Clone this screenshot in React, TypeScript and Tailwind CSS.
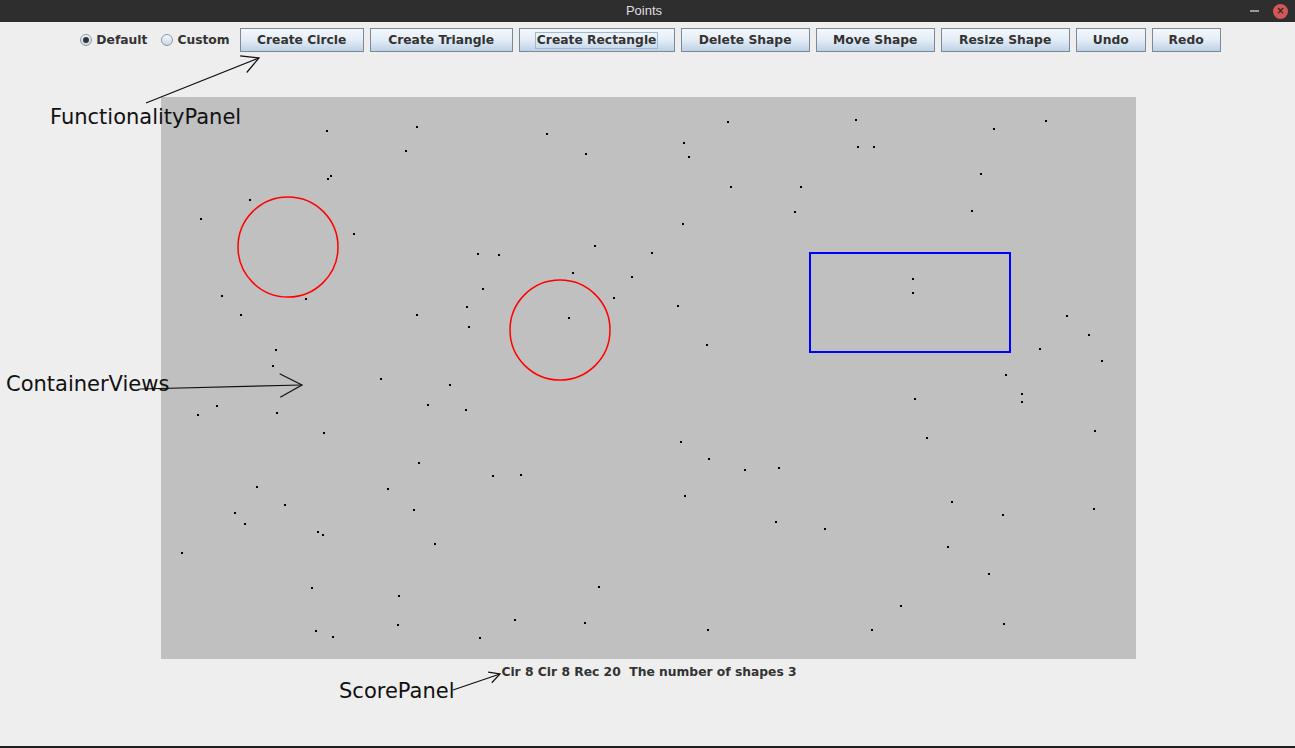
import React from 'react';

const dots: [number, number][] = [
    [326, 130], [416, 126], [546, 133], [405, 150], [585, 153], [683, 142], [688, 156], [727, 121],
    [855, 119], [857, 146], [873, 146], [993, 128], [1045, 120], [330, 175], [327, 178], [249, 199],
    [730, 186], [800, 186], [980, 173], [200, 218], [353, 233], [682, 223], [794, 211], [971, 210],
    [594, 245], [477, 253], [498, 254], [651, 252], [572, 272], [631, 276], [482, 288], [221, 295],
    [305, 298], [613, 297], [466, 306], [677, 305], [912, 278], [912, 292], [240, 314], [416, 314],
    [568, 317], [468, 326], [1066, 315], [1088, 334], [706, 344], [1039, 348], [275, 349], [272, 365],
    [1101, 360], [380, 378], [449, 384], [1005, 374], [1021, 393], [1021, 401], [216, 405], [197, 414],
    [276, 412], [427, 404], [465, 409], [914, 398], [323, 432], [926, 437], [1094, 430], [680, 441],
    [708, 458], [418, 462], [744, 469], [778, 467], [492, 475], [520, 474], [256, 486], [387, 488],
    [684, 495], [951, 501], [284, 504], [234, 512], [413, 509], [1002, 514], [1093, 508], [244, 523],
    [317, 531], [322, 534], [775, 521], [824, 528], [434, 543], [947, 546], [181, 552], [988, 573],
    [598, 586], [311, 587], [398, 595], [900, 605], [514, 619], [584, 622], [1003, 623], [315, 630],
    [332, 636], [397, 624], [479, 637], [707, 629], [871, 629],
];

const buttons: { label: string; w: string; focus?: boolean }[] = [
    { label: 'Create Circle', w: 'w-[124px]' },
    { label: 'Create Triangle', w: 'w-[143px]' },
    { label: 'Create Rectangle', w: 'w-[156px]', focus: true },
    { label: 'Delete Shape', w: 'w-[129px]' },
    { label: 'Move Shape', w: 'w-[119px]' },
    { label: 'Resize Shape', w: 'w-[129px]' },
    { label: 'Undo', w: 'w-[70px]' },
    { label: 'Redo', w: 'w-[69px]' },
];

const uiFont = { fontFamily: '"DejaVu Sans", "Liberation Sans", sans-serif' };

function Arrow({ x1, y1, x2, y2, head = 20, spread = 26 }: { x1: number; y1: number; x2: number; y2: number; head?: number; spread?: number }) {
    const ang = Math.atan2(y2 - y1, x2 - x1);
    const a = (spread * Math.PI) / 180;
    const p1 = [x2 - head * Math.cos(ang - a), y2 - head * Math.sin(ang - a)];
    const p2 = [x2 - head * Math.cos(ang + a), y2 - head * Math.sin(ang + a)];
    return (
        <g stroke="#111" strokeWidth={1.2} fill="none">
            <line x1={x1} y1={y1} x2={x2} y2={y2} />
            <polyline points={`${p1[0]},${p1[1]} ${x2},${y2} ${p2[0]},${p2[1]}`} />
        </g>
    );
}

function Radio({ label, checked }: { label: string; checked?: boolean }) {
    return (
        <div className="flex items-center gap-[4px]">
            <span className="w-[12px] h-[12px] rounded-full border border-[#8a99a8] bg-gradient-to-b from-[#f4f7fb] to-[#c9d8e8] flex items-center justify-center">
                {checked && <span className="w-[6px] h-[6px] rounded-full bg-[#333333]" />}
            </span>
            <span className="text-[12.3px] font-bold text-[#333333]">{label}</span>
        </div>
    );
}

export default function App() {
    return (
        <div className="relative w-[1295px] h-[748px] bg-[#eeeeee] overflow-hidden flex flex-col" style={uiFont}>
            {/* title bar */}
            <div className="h-[22px] bg-[#2e2e2e] flex items-center shrink-0">
                <div className="flex-1" />
                <span className="text-[13px] text-[#dedede]" style={{ fontFamily: '"Liberation Sans", sans-serif' }}>Points</span>
                <div className="flex-1 flex justify-end items-center gap-[14px] pr-[7px]">
                    <span className="w-[9px] h-[2px] bg-[#9a9a9a]" />
                    <span className="w-[15px] h-[15px] rounded-full bg-[#d25858] flex items-center justify-center text-[#3a2020] text-[10px] font-bold leading-none">×</span>
                </div>
            </div>

            {/* functionality panel */}
            <div className="h-[24px] mt-[6px] flex items-center justify-center pl-[6px]">
                <Radio label="Default" checked />
                <div className="ml-[14px]"><Radio label="Custom" /></div>
                <div className="ml-[10px] flex gap-[6px]">
                    {buttons.map((b) => (
                        <div
                            key={b.label}
                            className={`${b.w} h-[24px] border border-[#7a8a99] bg-gradient-to-b from-[#f3f7fb] via-[#e4edf6] to-[#bdd1e6] flex items-center justify-center`}
                        >
                            <span className={`text-[12.3px] font-bold text-[#333333] leading-[15px] px-[1px] ${b.focus ? 'border border-[#a3b8cc]' : 'border border-transparent'}`}>
                                {b.label}
                            </span>
                        </div>
                    ))}
                </div>
            </div>

            {/* container view */}
            <div className="ml-[161px] mt-[45px] w-[975px] h-[562px] bg-[#c0c0c0] shrink-0">
                <svg width={975} height={562} className="block">
                    {dots.map(([x, y], i) => (
                        <rect key={i} x={x - 161} y={y - 97} width={2} height={2} fill="#000" />
                    ))}
                    <circle cx={127} cy={150} r={50} fill="none" stroke="#ff0000" strokeWidth={1.5} />
                    <circle cx={399} cy={233} r={50} fill="none" stroke="#ff0000" strokeWidth={1.5} />
                    <rect x={649} y={156} width={200} height={99} fill="none" stroke="#0000ff" strokeWidth={2} />
                </svg>
            </div>

            {/* score panel */}
            <div className="mt-[4px] ml-[3px] flex justify-center">
                <span className="text-[12.3px] font-bold text-[#333333] whitespace-pre">Cir 8 Cir 8 Rec 20  The number of shapes 3</span>
            </div>

            <div className="flex-1" />
            <div className="h-[2px] bg-[#1e1e1e]" />

            {/* annotations */}
            <span className="absolute left-[50px] top-[107px] text-[21px] leading-[21px] text-[#111]">FunctionalityPanel</span>
            <span className="absolute left-[6px] top-[374px] text-[21px] leading-[21px] text-[#111]">ContainerViews</span>
            <span className="absolute left-[339px] top-[681px] text-[21px] leading-[21px] text-[#111]">ScorePanel</span>
            <svg className="absolute left-0 top-0 pointer-events-none" width={1295} height={748}>
                <Arrow x1={146} y1={103} x2={259} y2={58} head={19} spread={28} />
                <Arrow x1={140} y1={389} x2={302} y2={385} head={25} spread={28} />
                <Arrow x1={453} y1={690} x2={500} y2={674} head={12} spread={28} />
            </svg>
        </div>
    );
}
